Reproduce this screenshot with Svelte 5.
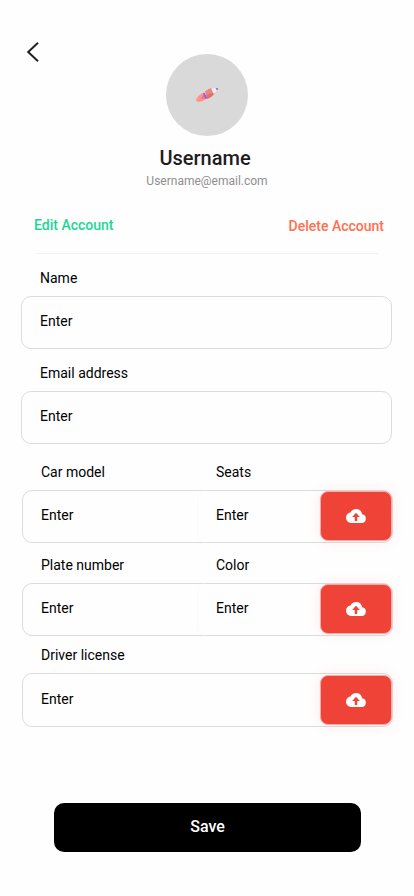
<script>
  const plain = [
    { label: 'Name', gap: 14 },
    { label: 'Email address', gap: 14 },
  ];
  const uploads = [
    { label: 'Car model', second: 'Seats', gap: 18 },
    { label: 'Plate number', second: 'Color', gap: 12 },
    { label: 'Driver license', second: '', gap: 9, tall: true },
  ];
</script>

<main>
  <nav>
    <svg class="back" width="16" height="24" viewBox="0 0 16 24" aria-label="Back">
      <path d="M14 2.8 L4.2 12 L14 21.2" />
    </svg>
  </nav>

  <header>
    <div class="avatar">
      <svg width="26" height="20" viewBox="0 0 26 20">
        <path d="M10 7.6C6.5 8.6 2.2 12.5 2.1 15.7C3.6 17.8 8.8 16.9 12.5 13.8Z" fill="#ff938b" />
        <path d="M9.5 10.2L6.4 13.4L11.2 13.4Z" fill="#e87770" />
        <path d="M11 6.6Q14.7 3.2 17.7 3L20.6 8.5Q17.7 12.4 13.3 13.9Z" fill="#ec8580" />
        <path d="M12.5 10.5L20 7L20.4 8.5Q17.7 12.2 13.3 13.7Z" fill="#db706c" />
        <path d="M8.8 8.6L10.7 7.9L13.3 13.2L11.5 13.9Z" fill="#9a55ee" />
        <path d="M17 3.5Q20.5 2.8 23 3.8Q22.4 6.8 19.7 9Z" fill="#efedf0" />
        <path d="M21.8 3.1L23.8 2.9V4.8L22.4 5Z" fill="#9a65ed" />
      </svg>
    </div>
    <h1>Username</h1>
    <p>Username@email.com</p>
  </header>

  <div class="actions">
    <span class="edit">Edit Account</span>
    <span class="delete">Delete Account</span>
  </div>

  <form>
    {#each plain as row}
      <div class="label" style="margin-top: {row.gap}px">{row.label}</div>
      <div class="box">Enter</div>
    {/each}
    <div class="vehicle">
      {#each uploads as row}
        <div class="label pair" style="margin-top: {row.gap}px">
          <span>{row.label}</span><span>{row.second}</span>
        </div>
        <div class="box pair" class:tall={row.tall}>
          <span>Enter</span>
          <span class:second={row.second}>{row.second ? 'Enter' : ''}</span>
          <div class="upload">
            <svg width="20" height="14" viewBox="0 0 24 16" preserveAspectRatio="none">
              <path
                fill-rule="evenodd"
                d="M19.35 6.04A7.49 7.49 0 0 0 12 0C9.11 0 6.6 1.64 5.35 4.04A6 6 0 0 0 6 16h13a5 5 0 0 0 .35-9.96zM13.5 9v4.6h-3V9H7.4L12 4.2 16.6 9z"
              />
            </svg>
          </div>
        </div>
      {/each}
    </div>
  </form>

  <button>Save</button>
</main>

<style>
  :global(body) {
    background: #fefefe;
  }
  main {
    width: 414px;
    height: 896px;
    overflow: hidden;
    font-family: Roboto, sans-serif;
    font-size: 14px;
    line-height: 20px;
    color: #000;
  }
  nav {
    height: 54px;
    padding: 40px 0 0 24px;
    box-sizing: border-box;
  }
  .back {
    display: block;
    overflow: visible;
  }
  .back path {
    fill: none;
    stroke: #212121;
    stroke-width: 2;
  }
  header {
    display: flex;
    flex-direction: column;
    align-items: center;
    height: 161px;
  }
  .avatar {
    width: 82px;
    height: 82px;
    border-radius: 50%;
    background: #d9d9d9;
    display: flex;
    align-items: center;
    justify-content: center;
  }
  h1 {
    margin: 10px 0 0 -4px;
    font-size: 20px;
    font-weight: 500;
    line-height: 24px;
    color: #1d1d1f;
  }
  p {
    margin: 3px 0 0;
    font-size: 12px;
    line-height: 16px;
    color: #8e8e8e;
  }
  .actions {
    display: flex;
    justify-content: space-between;
    width: 350px;
    height: 38px;
    margin-left: 34px;
    font-weight: 500;
  }
  .edit {
    color: #1bd795;
  }
  .delete {
    color: #ff6f50;
    padding-top: 1px;
  }
  form {
    padding-left: 21px;
  }
  form::before {
    content: '';
    display: block;
    width: 342px;
    height: 1px;
    margin-left: 15px;
    background: #f2f2f2;
  }
  .label {
    height: 28px;
    padding-left: 19px;
  }
  .box {
    box-sizing: border-box;
    width: 371px;
    height: 53px;
    padding: 14px 0 0 18px;
    border: 1px solid #dcdcdc;
    border-radius: 10px;
  }
  .vehicle {
    padding-left: 1px;
    width: 371px;
  }
  .vehicle .box {
    width: 371px;
  }
  .pair {
    display: grid;
    grid-template-columns: 175px 104px 72px;
    align-items: start;
  }
  .tall {
    height: 54px;
    padding-top: 15px;
  }
  .second {
    box-sizing: border-box;
    width: 240px;
    height: 53px;
    margin: -15px 0 0 -19px;
    padding: 15px 0 0 18px;
    border: 0 solid #fafafa;
    border-left-width: 1px;
    border-radius: 10px;
  }
  .upload {
    z-index: 1;
    box-sizing: border-box;
    width: 72px;
    height: 50px;
    margin-top: -14px;
    border: 1px solid #f7aaa4;
    border-radius: 8px;
    background: #ef4338;
    box-shadow: 0 0 14px rgba(239, 67, 56, 0.1);
    display: flex;
    align-items: center;
    justify-content: center;
  }
  .upload svg {
    fill: #fff;
  }
  button {
    display: block;
    width: 307px;
    height: 49px;
    margin: 76px 0 0 54px;
    padding: 0 0 1px;
    border: 0;
    border-radius: 10px;
    background: #000;
    color: #fff;
    font: 500 16px/20px Roboto, sans-serif;
  }
</style>
